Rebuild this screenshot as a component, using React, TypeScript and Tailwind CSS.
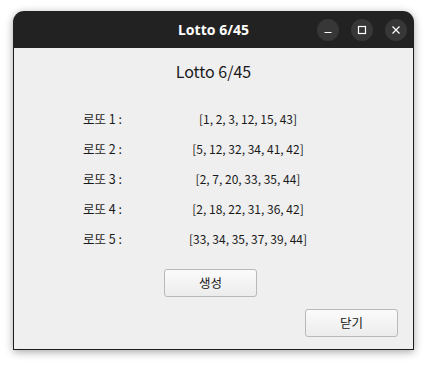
const rows = [
  { label: "로또 1 :", nums: [1, 2, 3, 12, 15, 43] },
  { label: "로또 2 :", nums: [5, 12, 32, 34, 41, 42] },
  { label: "로또 3 :", nums: [2, 7, 20, 33, 35, 44] },
  { label: "로또 4 :", nums: [2, 18, 22, 31, 36, 42] },
  { label: "로또 5 :", nums: [33, 34, 35, 37, 39, 44] },
];

function WinButton({ children }: { children: React.ReactNode }) {
  return (
    <div className="w-[22px] h-[22px] rounded-full bg-[#373737] flex items-center justify-center">
      {children}
    </div>
  );
}

export default function App() {
  return (
    <div
      className="w-[428px] h-[366px] bg-white pt-[11px] pl-[13px]"
      style={{ fontFamily: '"Noto Sans CJK KR", "Noto Sans", sans-serif' }}
    >
      <div className="w-[401px] h-[339px] flex flex-col rounded-t-[11px] overflow-hidden shadow-[0_2px_8px_rgba(0,0,0,0.35)]">
        {/* title bar */}
        <div className="relative h-[37px] bg-[#222222] flex items-center justify-center shrink-0">
          <span className="text-white text-[14px] font-bold" style={{ fontFamily: '"Noto Sans", sans-serif' }}>
            Lotto 6/45
          </span>
          <div className="absolute right-[7px] top-[8px] flex gap-[12px]">
            <WinButton>
              <svg width="10" height="10" viewBox="0 0 10 10">
                <path d="M1.5 7.5h7" stroke="#fff" strokeWidth="1.2" />
              </svg>
            </WinButton>
            <WinButton>
              <svg width="10" height="10" viewBox="0 0 10 10">
                <rect x="1.5" y="1.5" width="7" height="7" fill="none" stroke="#fff" strokeWidth="1.2" />
              </svg>
            </WinButton>
            <WinButton>
              <svg width="10" height="10" viewBox="0 0 10 10">
                <path d="M1.5 1.5l7 7M8.5 1.5l-7 7" stroke="#fff" strokeWidth="1.2" />
              </svg>
            </WinButton>
          </div>
        </div>

        {/* body */}
        <div className="flex-1 bg-[#efefef] border border-t-0 border-[#1c1c1c] flex flex-col text-[#1a1a1a]">
          <div className="text-center text-[16px] mt-[11px] leading-[24px]">Lotto 6/45</div>

          <div className="mt-[21px] grid grid-cols-[100px_130px] pl-[69px]">
            {rows.map((r) => (
              <div key={r.label} className="contents">
                <div className="h-[30px] flex items-center text-[12.5px]">{r.label}</div>
                <div className="h-[30px] flex items-center justify-center text-[12px] whitespace-nowrap">
                  [{r.nums.join(", ")}]
                </div>
              </div>
            ))}
          </div>

          <div className="mt-[15px] pl-[150px]">
            <button className="w-[93px] h-[28px] rounded-[3px] border border-[#b9b9b9] bg-gradient-to-b from-[#fbfbfb] to-[#ececec] text-[12.5px]">
              생성
            </button>
          </div>

          <div className="mt-[12px] flex justify-end pr-[15px]">
            <button className="w-[93px] h-[28px] rounded-[3px] border border-[#b9b9b9] bg-gradient-to-b from-[#fbfbfb] to-[#ececec] text-[12.5px]">
              닫기
            </button>
          </div>
        </div>
      </div>
    </div>
  );
}
